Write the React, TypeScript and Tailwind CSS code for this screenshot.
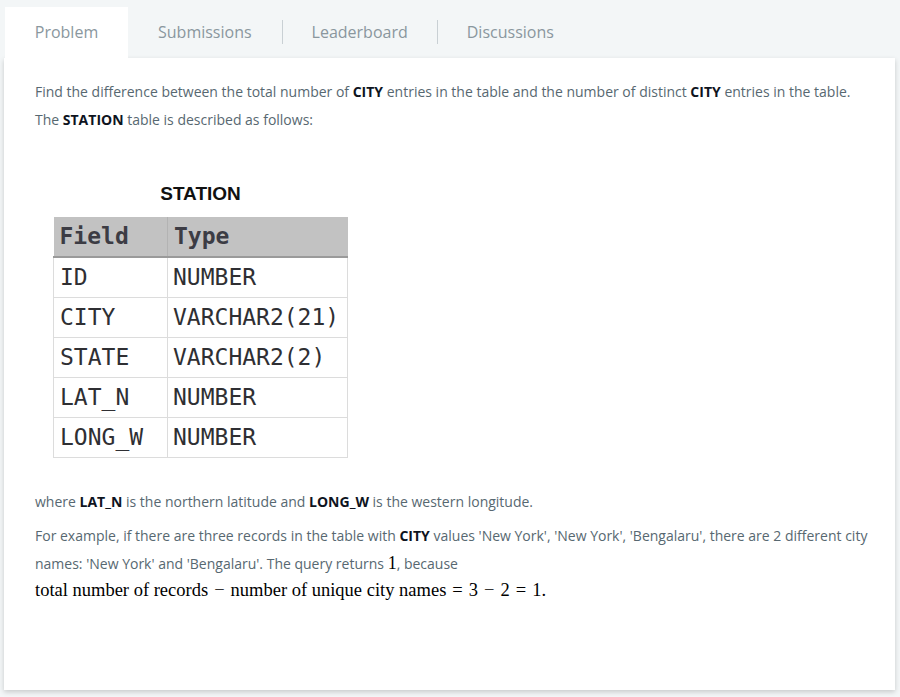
import React from 'react';

const rows: [string, string][] = [
  ['ID', 'NUMBER'],
  ['CITY', 'VARCHAR2(21)'],
  ['STATE', 'VARCHAR2(2)'],
  ['LAT_N', 'NUMBER'],
  ['LONG_W', 'NUMBER'],
];

const B: React.FC<{ children: React.ReactNode }> = ({ children }) => (
  <strong className="font-bold text-[#0e141e]">{children}</strong>
);

const Op: React.FC<{ children: React.ReactNode }> = ({ children }) => (
  <span className="mx-[6px]">{children}</span>
);

const App: React.FC = () => {
  return (
    <div className="w-[900px] h-[697px] bg-[#f3f6f7] pt-[7px] overflow-hidden" style={{ fontFamily: '"Open Sans", sans-serif' }}>
      <div className="flex items-stretch h-[51px] pl-[5px] pb-[2px] text-[16px] text-[#8a979e]">
        <div className="bg-white w-[123px] -mb-[2px] pb-[2px] flex items-center justify-center">Problem</div>
        <div className="flex items-center px-[30px]">Submissions</div>
        <div className="w-px h-[24px] self-center bg-[#c9d0d4]" />
        <div className="flex items-center px-[29px]">Leaderboard</div>
        <div className="w-px h-[24px] self-center bg-[#c9d0d4]" />
        <div className="flex items-center px-[29px]">Discussions</div>
      </div>

      <div className="ml-[4px] w-[891px] h-[632px] bg-white shadow-[0_2px_5px_rgba(0,0,0,0.18)] pl-[31px] pr-[24px] pt-[20px] text-[14px] text-[#576871] leading-[28px]">
        <p>
          Find the difference between the total number of <B>CITY</B> entries in the table and the number of distinct <B>CITY</B> entries in the table.
          <br />
          The <B>STATION</B> table is described as follows:
        </p>

        <div className="mt-[48px] ml-[18px] w-[295px]" style={{ fontFamily: '"DejaVu Sans Mono", monospace' }}>
          <div className="text-center text-[19px] font-bold text-[#111] leading-[24px] mb-[11px]" style={{ fontFamily: '"Liberation Sans", Arial, sans-serif' }}>
            STATION
          </div>
          <table className="w-full border-collapse text-[23px] text-[#2f2f33] leading-none">
            <thead>
              <tr className="bg-[#c2c2c2] h-[40px]">
                <th className="text-left font-bold pl-[6px] w-[114px] border-r border-[#b3b3b3] border-b-2 border-b-[#9a9a9a] text-[#3c3c44]">Field</th>
                <th className="text-left font-bold pl-[6px] border-b-2 border-b-[#9a9a9a] text-[#3c3c44]">Type</th>
              </tr>
            </thead>
            <tbody>
              {rows.map(([f, t]) => (
                <tr key={f} className="h-[40px]">
                  <td className="pl-[6px] border border-[#dcdcdc]">{f}</td>
                  <td className="pl-[5px] border border-[#dcdcdc]">{t}</td>
                </tr>
              ))}
            </tbody>
          </table>
        </div>

        <p className="mt-[30px]">
          where <B>LAT_N</B> is the northern latitude and <B>LONG_W</B> is the western longitude.
        </p>
        <p className="mt-[6px]">
          For example, if there are three records in the table with <B>CITY</B> values 'New York', 'New York', 'Bengalaru', there are 2 different city names: 'New York' and 'Bengalaru'. The query returns{' '}
          <span className="text-[18px] leading-[20px] text-black" style={{ fontFamily: '"Liberation Serif", serif' }}>1</span>, because
        </p>
        <p className="text-[18.5px] text-black leading-[25px]" style={{ fontFamily: '"Liberation Serif", serif' }}>
          total number of records<Op>−</Op>number of unique city names<Op>=</Op>3<Op>−</Op>2<Op>=</Op>1.
        </p>
      </div>
    </div>
  );
};

export default App;
